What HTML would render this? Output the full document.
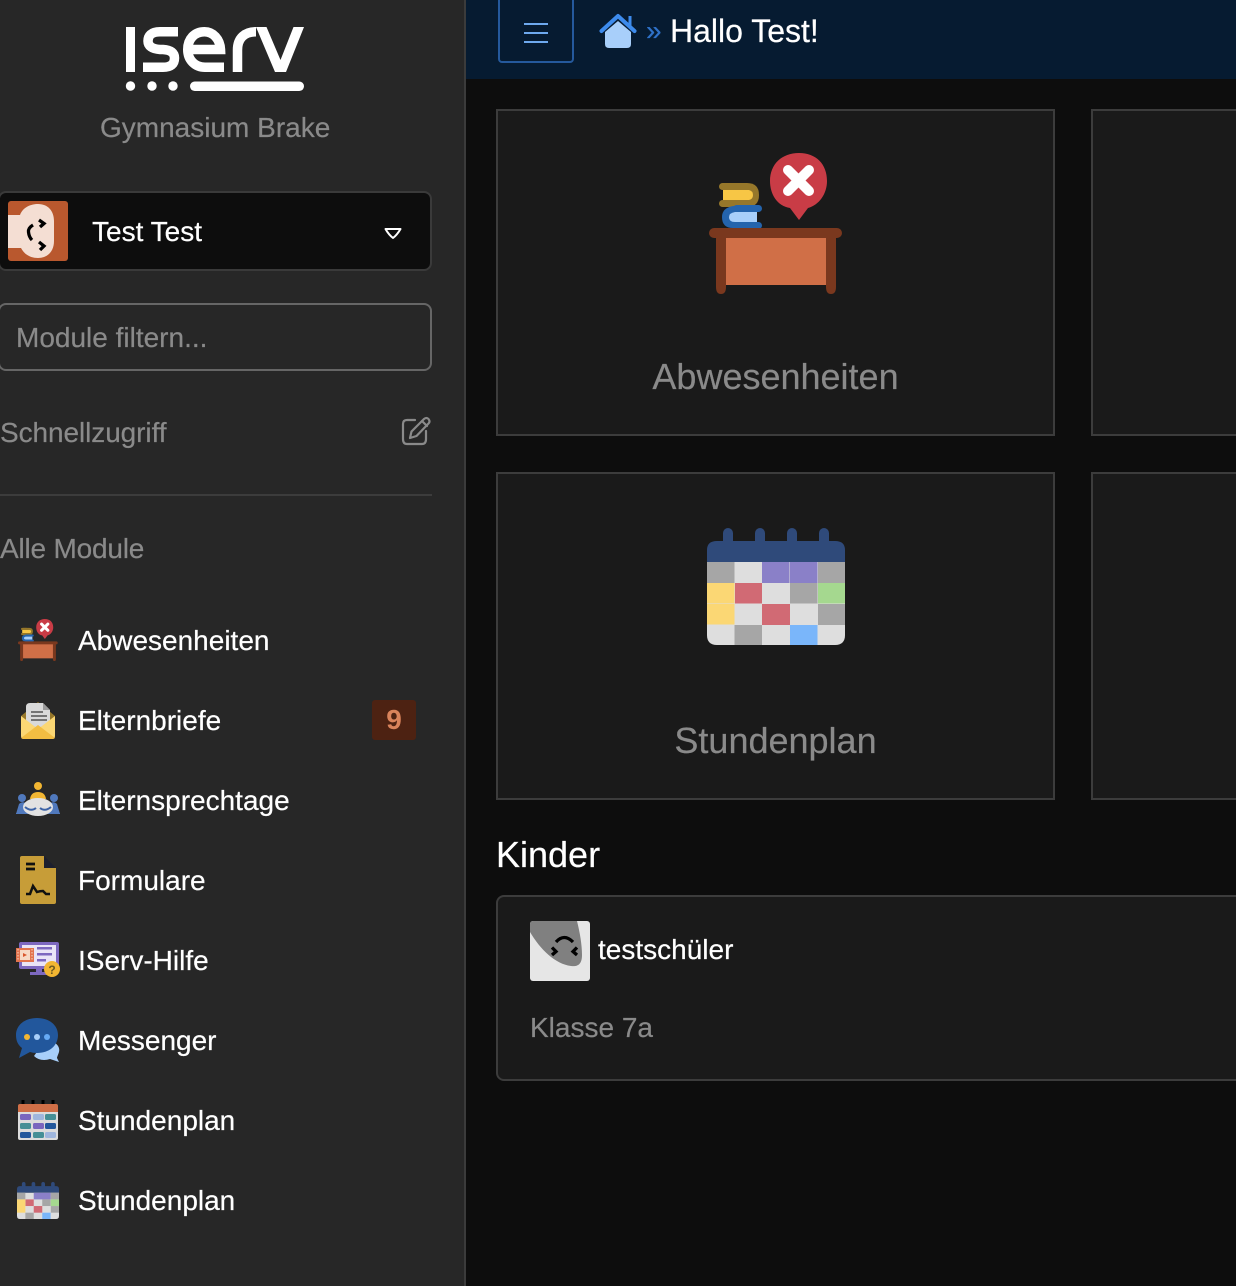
<!DOCTYPE html>
<html lang="de"><head><meta charset="utf-8"><title>IServ</title>
<style>
*{box-sizing:border-box}
html,body{margin:0;padding:0;width:1236px;height:1286px;overflow:hidden;background:#0d0d0d;font-family:"Liberation Sans",sans-serif}
.a{position:absolute}
.t{position:absolute;white-space:nowrap;line-height:1;-webkit-text-stroke:.2px currentColor}
#side{position:absolute;left:0;top:0;width:466px;height:1286px;background:#272727;border-right:2px solid #3b3b3b}
.nav{color:#fff;font-size:28px;left:78px}
.card{position:absolute;background:#1a1a1a;border:2px solid #3c3c3c}
.big{color:#8a8a8a;font-size:36px;text-align:center}
svg{position:absolute;display:block;overflow:visible}
</style></head><body>
<div id="side"></div>

<svg style="left:0;top:0" width="320" height="100" fill="none" stroke="#fff" stroke-width="9.500" role="img" aria-label="IServ">
<rect x="126" y="27" width="9" height="45" fill="#fff" stroke="none"/>
<path d="M178 31.750H160C151 31.750 148 36 148 41C148 46 152 49 160 49.500H163C171 50 174.500 53 174.500 58C174.500 64 171 67.250 163 67.250H143"/>
<path d="M188 49.500H220.500C220 39 213 31.750 204.500 31.750C194.500 31.750 187.750 39 187.750 49.500C187.750 60 195 67.250 205 67.250H224"/>
<path d="M237.500 72V50C237.500 38 245 31.750 256 31.750"/>
<polygon points="256,27 266.500,27 280.500,60 293.500,27 304,27 286,72 275,72" fill="#fff" stroke="none"/>
<circle cx="130.500" cy="86" r="4.700" fill="#fff" stroke="none"/><circle cx="152" cy="86" r="4.700" fill="#fff" stroke="none"/><circle cx="173" cy="86" r="4.700" fill="#fff" stroke="none"/>
<rect x="190" y="81.500" width="114" height="9.500" rx="4.700" fill="#fff" stroke="none"/>
</svg>
<div class="t" style="left:100px;top:114px;font-size:28px;color:#8a8a8a">Gymnasium Brake</div>

<div class="a" style="left:-2px;top:191px;width:434px;height:80px;background:#0d0d0d;border:2px solid #3a3a3a;border-radius:8px"></div>
<svg style="left:8px;top:201px" width="60" height="60" viewBox="0 0 60 60">
<rect width="60" height="60" rx="3" fill="#b9582e"/>
<path d="M0 14H12C15 6 23 3 30 3C40 3 46 10 46 20V40C46 51 39 57 30 57C22 57 16 53 13 47H0Z" fill="#f4ded3"/>
<g fill="none" stroke="#000" stroke-width="3.300"><path d="M25 24Q20 27 20.500 31Q21 36 24 39"/><path d="M31 19L36 22.500L32 26"/><path d="M31 41L36 45L32 49"/></g>
</svg>
<div class="t" style="left:92px;top:218px;font-size:28px;color:#fff">Test Test</div>
<svg style="left:384px;top:227px" width="18" height="13" viewBox="0 0 18 13"><path d="M1.500 2H16.500Q13 8 9 11Q5 8 1.500 2Z" fill="none" stroke="#fff" stroke-width="2" stroke-linejoin="round"/></svg>

<div class="a" style="left:-2px;top:303px;width:434px;height:68px;background:#272727;border:2px solid #666;border-radius:8px"></div>
<div class="t" style="left:16px;top:324px;font-size:28px;color:#8a8a8a">Module filtern...</div>

<div class="t" style="left:0;top:419px;font-size:28px;color:#8a8a8a;letter-spacing:-.08px">Schnellzugriff</div>
<svg style="left:400px;top:415px" width="32" height="32" viewBox="0 0 32 32" fill="none" stroke="#8a8a8a" stroke-width="2.200" stroke-linejoin="round" stroke-linecap="round">
<path d="M15 5H7Q3 5 3 9V24Q3 29 7 29H22Q26 29 26 24V16"/>
<path d="M10 23L11.500 16.500L24 4Q26.500 2 28.500 4Q30.500 6.500 28.500 8.500L16.500 21Z"/><path d="M22 6L27 11"/>
</svg>
<div class="a" style="left:0;top:494px;width:432px;height:2px;background:#3c3c3c"></div>
<div class="t" style="left:0;top:535px;font-size:28px;color:#8a8a8a;letter-spacing:-.2px">Alle Module</div>

<!-- small desk -->
<svg style="left:18px;top:618px" width="40" height="44" viewBox="0 0 134 143">
<path d="M16 31H38Q50 31 50 43Q50 55 38 55H16" fill="#96772a"/><rect x="10" y="31" width="22" height="7" rx="3.500" fill="#96772a"/><rect x="10" y="48" width="22" height="7" rx="3.500" fill="#96772a"/>
<path d="M14 38H40Q44 39 44 43Q44 47 40 48H14Z" fill="#f7c645"/>
<path d="M48 54H24Q13 56 13 65Q13 76 24 76H48" fill="#2464ad"/><rect x="24" y="53" width="29" height="7" rx="3.500" fill="#2464ad"/><rect x="24" y="70" width="29" height="7" rx="3.500" fill="#2464ad"/>
<path d="M48 60H26Q20 61 20 65Q20 70 26 70H48Z" fill="#a8cffa"/>
<path d="M90 68L81 56C68 54 61 42 61 29C61 12 73 1 90 1S118 12 118 29C118 42 110 53 99 56Z" fill="#c93c46"/>
<path d="M79 18L100 39M100 18L79 39" stroke="#fff" stroke-width="10" stroke-linecap="round"/>
<rect x="0" y="76" width="133" height="10" rx="5" fill="#7a381e"/>
<path d="M7 84H127V135Q127 142 122 142T117 135V132H17V135Q17 142 12 142T7 135Z" fill="#7a381e"/>
<rect x="17" y="86" width="100" height="47" fill="#d06f47"/>
</svg>
<div class="t nav" style="top:627px">Abwesenheiten</div>

<!-- envelope -->
<svg style="left:20px;top:702px" width="36" height="38" viewBox="0 0 36 38">
<path d="M1 14L18 0L35 14V25H1Z" fill="#96772a"/>
<path d="M6 5Q6 1 10 1H23L30 8V26H6Z" fill="#d9d9d9"/><path d="M23 1L30 8H23Z" fill="#9a9a9a"/>
<path d="M11 10H23M11 14H27M11 18H27" stroke="#666" stroke-width="1.800"/>
<path d="M1 14L18 27L35 14V34Q35 37 32 37H4Q1 37 1 34Z" fill="#fbd774"/>
<path d="M1 36L18 23L35 36Q34 37 32 37H4Q2 37 1 36Z" fill="#f2bd42"/>
</svg>
<div class="t nav" style="top:707px">Elternbriefe</div>
<div class="a" style="left:372px;top:700px;width:44px;height:40px;background:#4d2212;border-radius:3px"></div>
<div class="t" style="left:372px;top:706px;width:44px;text-align:center;font-size:28px;font-weight:700;color:#d9835b;-webkit-text-stroke:0">9</div>

<!-- meeting -->
<svg style="left:16px;top:781px" width="44" height="36" viewBox="0 0 44 36">
<circle cx="22" cy="5" r="4" fill="#f2b632"/>
<path d="M14 18Q15 11 22 11T30 18Z" fill="#f2b632"/>
<circle cx="6" cy="17" r="4" fill="#5079bd"/><circle cx="38" cy="17" r="4" fill="#5079bd"/>
<path d="M0 33L3 23Q6 20 10 22L18 33ZM26 33L34 22Q38 20 41 23L44 33Z" fill="#5079bd"/>
<ellipse cx="22" cy="26" rx="15" ry="9" fill="#e2e2e2"/>
<path d="M9 26Q15 31 20 27M24 27Q29 31 35 26" stroke="#3c63a6" stroke-width="2" fill="none"/>
<path d="M0 32H9L12 33H0ZM35 32H44V33H32Z" fill="#5079bd"/>
</svg>
<div class="t nav" style="top:787px">Elternsprechtage</div>

<!-- forms -->
<svg style="left:20px;top:856px" width="36" height="48" viewBox="0 0 36 48">
<path d="M2 0H24V12H36V46Q36 48 34 48H2Q0 48 0 46V2Q0 0 2 0Z" fill="#c79d38"/>
<path d="M24 0L36 12H24Z" fill="#1c1f2e"/>
<path d="M6 8H15M6 13H15" stroke="#111" stroke-width="2.800"/>
<path d="M6 38H10L13 30L17 36Q20 35 23 35L26 38H30" stroke="#111" stroke-width="2.500" fill="none"/>
</svg>
<div class="t nav" style="top:867px">Formulare</div>

<!-- help -->
<svg style="left:16px;top:941px" width="46" height="38" viewBox="0 0 46 38">
<rect x="3" y="1" width="40" height="27" rx="2" fill="#7d68c0"/><rect x="6" y="4" width="34" height="21" fill="#e9e4f7"/>
<path d="M20 28H26V31H32V34H14V31H20Z" fill="#7d68c0"/>
<rect x="21" y="6" width="15" height="2.500" fill="#7d68c0"/><rect x="21" y="12" width="15" height="2.500" fill="#7d68c0"/><rect x="21" y="18" width="9" height="2.500" fill="#7d68c0"/>
<rect x="0" y="7" width="18" height="14" fill="#e2734d"/><rect x="4" y="9" width="10" height="10" fill="#f7d9c4"/><path d="M7 12L11 14L7 16Z" fill="#d9572c"/>
<path d="M2 8V20M16 8V20" stroke="#f7d9c4" stroke-width="1" stroke-dasharray="1.500 1.500"/>
<circle cx="36" cy="28" r="8" fill="#f2b632"/><text x="36" y="33" font-size="12" font-weight="700" text-anchor="middle" fill="#6e5a1f" font-family="Liberation Sans">?</text>
</svg>
<div class="t nav" style="top:947px">IServ-Hilfe</div>

<!-- messenger -->
<svg style="left:16px;top:1017px" width="44" height="46" viewBox="0 0 44 46">
<path d="M28 25H38C42 28 44 31 43 35C42 38 41 40 41 41L43 45L34 42C28 44 22 43 18 39Z" fill="#a8cffa"/>
<path d="M21 1C33 1 42 8 42 18C42 29 33 36 21 36C18 36 16 35.500 14 35L3 41L6 31C2 28 0 24 0 18C0 8 9 1 21 1Z" fill="#22579c"/>
<circle cx="11" cy="20" r="3" fill="#f2b632"/><circle cx="21" cy="20" r="3" fill="#a8cffa"/><circle cx="31" cy="20" r="3" fill="#66aaf5"/>
</svg>
<div class="t nav" style="top:1027px">Messenger</div>

<!-- timetable orange -->
<svg style="left:18px;top:1100px" width="40" height="40" viewBox="0 0 40 40">
<path d="M3.500 4V0M13.500 4V0M23.500 4V0M33.500 4V0" stroke="#000" stroke-width="3" transform="translate(1.500 0)"/>
<path d="M0 12V6Q0 4 2 4H38Q40 4 40 6V12Z" fill="#d06f47"/>
<path d="M0 12H40V38Q40 40 38 40H2Q0 40 0 38Z" fill="#dcdcdc"/>
<rect x="2" y="14" width="11" height="6" rx="1.500" fill="#7a66be"/><rect x="15" y="14" width="11" height="6" rx="1.500" fill="#9fb6dd"/><rect x="27" y="14" width="11" height="6" rx="1.500" fill="#458f96"/>
<rect x="2" y="23" width="11" height="6" rx="1.500" fill="#458f96"/><rect x="15" y="23" width="11" height="6" rx="1.500" fill="#7a66be"/><rect x="27" y="23" width="11" height="6" rx="1.500" fill="#22579c"/>
<rect x="2" y="32" width="11" height="6" rx="1.500" fill="#22579c"/><rect x="15" y="32" width="11" height="6" rx="1.500" fill="#458f96"/><rect x="27" y="32" width="11" height="6" rx="1.500" fill="#9fb6dd"/>
</svg>
<div class="t nav" style="top:1107px">Stundenplan</div>

<!-- timetable small -->
<svg style="left:17px;top:1182px" width="42" height="37" viewBox="0 0 138 117" preserveAspectRatio="none">
<g fill="#2f4a7a"><rect x="16" y="0" width="12" height="20" rx="6"/><rect x="48" y="0" width="12" height="20" rx="6"/><rect x="80" y="0" width="12" height="20" rx="6"/><rect x="112" y="0" width="12" height="20" rx="6"/><path d="M0 34V22Q0 13 10 13H128Q138 13 138 22V34Z"/></g>
<path d="M0 34H138V107Q138 117 128 117H10Q0 117 0 107Z" fill="#dedede"/>
<rect x="0" y="34" width="27.500" height="21" fill="#a6a6a6"/><rect x="55" y="34" width="56" height="21" fill="#8a80c8"/><rect x="111" y="34" width="27" height="21" fill="#a6a6a6"/>
<rect x="0" y="55" width="27.500" height="42" fill="#fbd774"/><rect x="28" y="55" width="27" height="21" fill="#d16a74"/><rect x="83" y="55" width="27.500" height="21" fill="#a6a6a6"/><rect x="111" y="55" width="27" height="21" fill="#a5d88f"/>
<rect x="55" y="76" width="28" height="21" fill="#d16a74"/><rect x="111" y="76" width="27" height="21" fill="#a6a6a6"/>
<rect x="27.500" y="97" width="27.500" height="20" fill="#a6a6a6"/><rect x="83" y="97" width="27.500" height="20" fill="#7ab6fa"/>
</svg>
<div class="t nav" style="top:1187px">Stundenplan</div>

<!-- top bar -->
<div class="a" style="left:466px;top:0;width:770px;height:79px;background:#061b31"></div>
<div class="a" style="left:498px;top:-4px;width:76px;height:67px;border:2px solid #25599c;border-radius:4px"></div>
<div class="a" style="left:524px;top:23px;width:24px;height:2px;background:#6ea9ee"></div>
<div class="a" style="left:524px;top:32px;width:24px;height:2px;background:#6ea9ee"></div>
<div class="a" style="left:524px;top:41px;width:24px;height:2px;background:#6ea9ee"></div>
<svg style="left:599px;top:13px" width="38" height="36" viewBox="0 0 38 36">
<path d="M6 19L19 8L32 19V31Q32 35 28 35H10Q6 35 6 31Z" fill="#a8cffa"/>
<path d="M2.500 18L19 3L35.500 18" fill="none" stroke="#3d8bec" stroke-width="4" stroke-linecap="round" stroke-linejoin="round"/>
<path d="M31 3V13" stroke="#3d8bec" stroke-width="3"/>
</svg>
<div class="t" style="left:646px;top:17px;font-size:28px;color:#2f72c9">»</div>
<div class="t" style="left:670px;top:15px;font-size:32px;color:#fff">Hallo Test!</div>

<!-- cards -->
<div class="card" style="left:496px;top:109px;width:559px;height:327px"></div>
<div class="card" style="left:1091px;top:109px;width:160px;height:327px"></div>
<div class="card" style="left:496px;top:472px;width:559px;height:328px"></div>
<div class="card" style="left:1091px;top:472px;width:160px;height:328px"></div>

<svg style="left:709px;top:152px" width="134" height="143" viewBox="0 0 134 143">
<path d="M16 31H38Q50 31 50 43Q50 55 38 55H16" fill="#96772a"/><rect x="10" y="31" width="22" height="7" rx="3.500" fill="#96772a"/><rect x="10" y="48" width="22" height="7" rx="3.500" fill="#96772a"/>
<path d="M14 38H40Q44 39 44 43Q44 47 40 48H14Z" fill="#f7c645"/>
<path d="M48 54H24Q13 56 13 65Q13 76 24 76H48" fill="#2464ad"/><rect x="24" y="53" width="29" height="7" rx="3.500" fill="#2464ad"/><rect x="24" y="70" width="29" height="7" rx="3.500" fill="#2464ad"/>
<path d="M48 60H26Q20 61 20 65Q20 70 26 70H48Z" fill="#a8cffa"/>
<path d="M90 68L81 56C68 54 61 42 61 29C61 12 73 1 90 1S118 12 118 29C118 42 110 53 99 56Z" fill="#c93c46"/>
<path d="M79 18L100 39M100 18L79 39" stroke="#fff" stroke-width="10" stroke-linecap="round"/>
<rect x="0" y="76" width="133" height="10" rx="5" fill="#7a381e"/>
<path d="M7 84H127V135Q127 142 122 142T117 135V132H17V135Q17 142 12 142T7 135Z" fill="#7a381e"/>
<rect x="17" y="86" width="100" height="47" fill="#d06f47"/>
</svg>
<div class="t big" style="left:496px;top:359px;width:559px">Abwesenheiten</div>

<svg style="left:707px;top:528px" width="138" height="117" viewBox="0 0 138 117">
<g fill="#2f4a7a"><rect x="16" y="0" width="10" height="20" rx="5"/><rect x="48" y="0" width="10" height="20" rx="5"/><rect x="80" y="0" width="10" height="20" rx="5"/><rect x="112" y="0" width="10" height="20" rx="5"/><path d="M0 34V22Q0 13 10 13H128Q138 13 138 22V34Z"/></g>
<path d="M0 34H138V107Q138 117 128 117H10Q0 117 0 107Z" fill="#dedede"/>
<rect x="0" y="34" width="27.500" height="21" fill="#a6a6a6"/><rect x="55" y="34" width="27.500" height="21" fill="#8a80c8"/><rect x="83" y="34" width="27.500" height="21" fill="#8a80c8"/><rect x="111" y="34" width="27" height="21" fill="#a6a6a6"/>
<rect x="0" y="55" width="27.500" height="20.500" fill="#fbd774"/><rect x="28" y="55" width="27" height="20.500" fill="#d16a74"/><rect x="83" y="55" width="27.500" height="20.500" fill="#a6a6a6"/><rect x="111" y="55" width="27" height="20.500" fill="#a5d88f"/>
<rect x="0" y="76" width="27.500" height="20.500" fill="#fbd774"/><rect x="55" y="76" width="28" height="21" fill="#d16a74"/><rect x="111" y="76" width="27" height="21" fill="#a6a6a6"/>
<rect x="27.500" y="97" width="27.500" height="20" fill="#a6a6a6"/><rect x="83" y="97" width="27.500" height="20" fill="#7ab6fa"/>
</svg>
<div class="t big" style="left:496px;top:723px;width:559px">Stundenplan</div>

<div class="t" style="left:496px;top:837px;font-size:36px;color:#fff">Kinder</div>
<div class="a" style="left:496px;top:895px;width:780px;height:186px;background:#1a1a1a;border:2px solid #3c3c3c;border-radius:8px"></div>
<svg style="left:530px;top:921px" width="60" height="60" viewBox="0 0 60 60">
<rect width="60" height="60" rx="3" fill="#e6e6e6"/>
<path d="M3 0H47C50 12 52 24 52 34C52 43 48 46 41 45C25 43 10 28 0 11V3Q0 0 3 0Z" fill="#808080"/>
<g fill="none" stroke="#000" stroke-width="3.300"><path d="M26 21Q34 12 43 21"/><path d="M22 26.500L26 30.500L22 34"/><path d="M47 26.500L43 30.500L47 34"/></g>
</svg>
<div class="t" style="left:598px;top:936px;font-size:28px;color:#fff">testschüler</div>
<div class="t" style="left:530px;top:1014px;font-size:28px;color:#8a8a8a">Klasse 7a</div>
</body></html>
